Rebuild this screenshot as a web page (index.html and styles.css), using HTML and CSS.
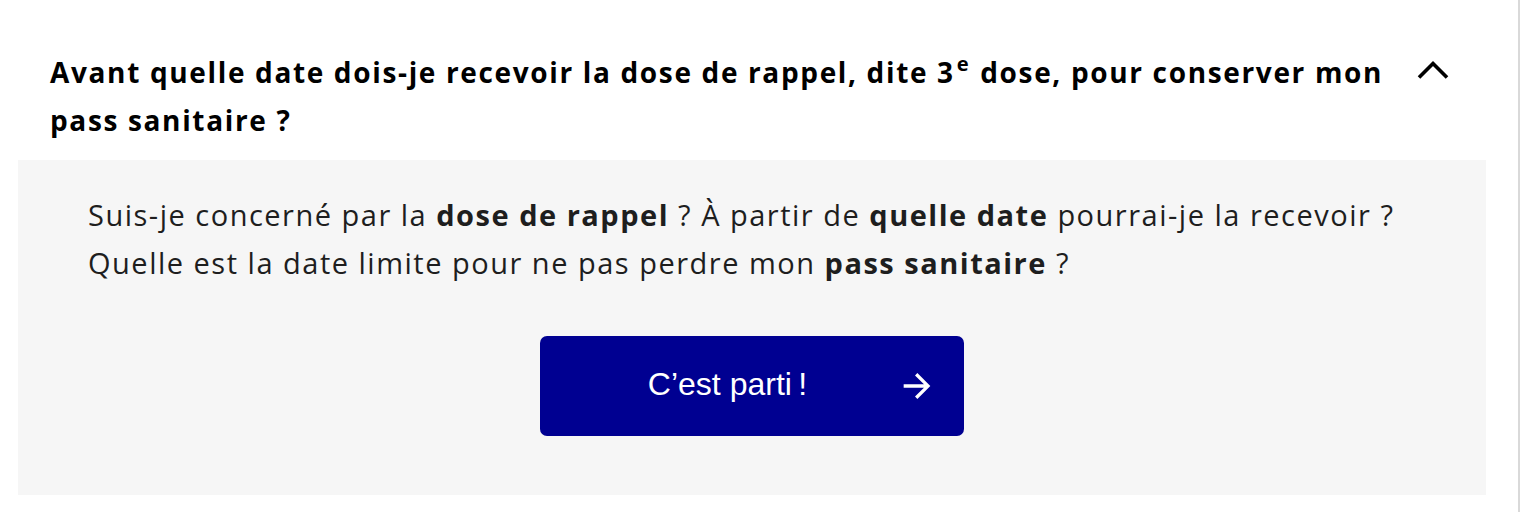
FILE: index.html
```html
<!DOCTYPE html>
<html lang="fr">
<head>
<meta charset="utf-8">
<link rel="stylesheet" href="styles.css">
</head>
<body>
<div class="page">
  <section class="accordion">
    <div class="acc-header">
      <h3 class="acc-title">Avant quelle date dois-je recevoir la dose de rappel, dite 3<sup>e</sup> dose, pour conserver mon pass sanitaire ?</h3>
      <span class="chevron">
        <svg width="34" height="20" viewBox="0 0 34 20"><polyline points="3,17.5 17,3.5 31,17.5" fill="none" stroke="#000" stroke-width="3.6"/></svg>
      </span>
    </div>
    <div class="acc-body">
      <p class="intro">Suis-je concerné par la <strong>dose de rappel</strong> ? À partir de <strong>quelle date</strong> pourrai-je la recevoir ?<br>Quelle est la date limite pour ne pas perdre mon <strong>pass sanitaire</strong> ?</p>
      <div class="actions">
        <a class="btn" href="#">
          <span class="btn-label">C’est parti&#8239;!</span>
          <svg class="btn-icon" width="40" height="40" viewBox="0 0 24 24"><path fill="#fff" d="M16.172 11l-5.364-5.364 1.414-1.414L20 12l-7.778 7.778-1.414-1.414L16.172 13H4v-2z"/></svg>
        </a>
      </div>
    </div>
  </section>
</div>
</body>
</html>
```
FILE: styles.css
```css
html, body {
  margin: 0;
  padding: 0;
  background: #fff;
}
.page {
  width: 1518px;
  height: 512px;
  border-right: 2px solid #d9d9d9;
  box-sizing: content-box;
  overflow: hidden;
}
.accordion {
  margin-left: 18px;
  width: 1468px;
}
.acc-header {
  display: flex;
  align-items: flex-start;
  padding: 48px 36px 16px 32px;
}
.acc-title {
  flex: 1;
  margin: 0;
  font-family: "Open Sans", "Noto Sans", sans-serif;
  font-weight: 700;
  font-size: 28px;
  letter-spacing: 1.65px;
  line-height: 48px;
  color: #000;
  padding-right: 20px;
}
.acc-title sup {
  font-size: 0.72em;
  line-height: 0;
  vertical-align: 0.6em;
  margin: 0 1px 0 2px;
}
.chevron {
  display: flex;
  align-items: center;
  height: 48px;
  margin-top: -2px;
}
.acc-body {
  background: #f6f6f6;
  padding: 31px 70px 59px 70px;
}
.intro {
  margin: 0;
  font-family: "Open Sans", "Noto Sans", sans-serif;
  font-size: 29px;
  letter-spacing: 1.5px;
  line-height: 48px;
  color: #1e1e1e;
}
.intro strong {
  font-weight: 700;
}
.actions {
  display: flex;
  justify-content: center;
  margin-top: 49px;
}
.btn {
  display: grid;
  grid-template-columns: 1fr auto;
  align-items: center;
  width: 424px;
  height: 100px;
  box-sizing: border-box;
  padding: 0 27px 0 28px;
  column-gap: 10px;
  background: #000091;
  border-radius: 7px;
  text-decoration: none;
  color: #fff;
}
.btn-label {
  text-align: center;
  font-family: "Liberation Sans", Arial, sans-serif;
  font-size: 32px;
  line-height: 1;
  margin-top: -4px;
}
.btn-icon {
  display: block;
}
```
